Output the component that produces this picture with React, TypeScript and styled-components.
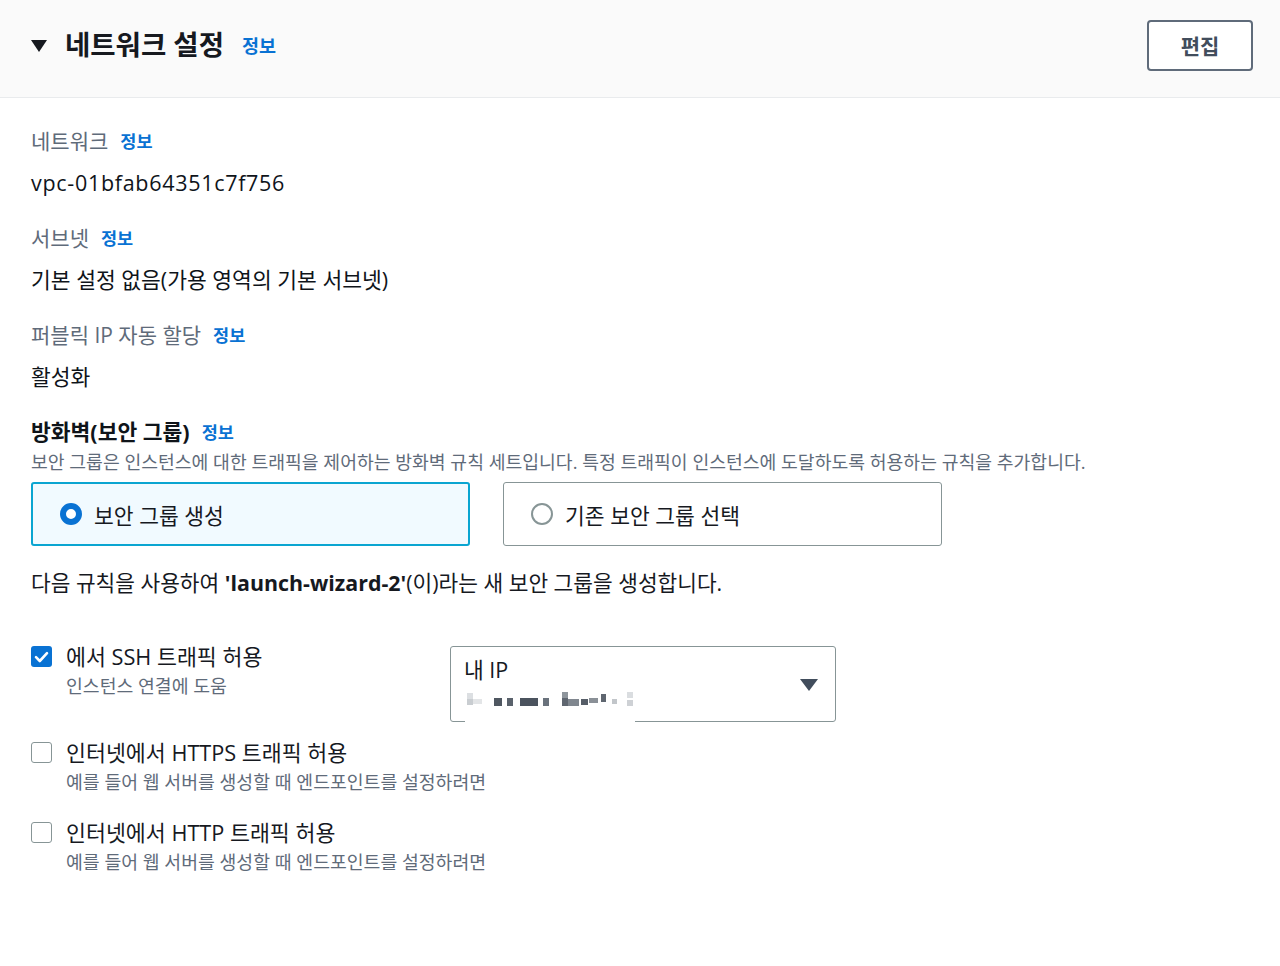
import * as React from 'react'
import styled, { createGlobalStyle } from 'styled-components'

const GlobalStyle = createGlobalStyle`
  html, body {
    margin: 0;
    padding: 0;
    background: #ffffff;
  }
  body {
    font-family: 'Open Sans', 'Noto Sans CJK KR', sans-serif;
    color: #16191f;
  }
`

const Page = styled.div`
  width: 1280px;
  min-height: 966px;
  background: #ffffff;
`

const Header = styled.header`
  height: 98px;
  box-sizing: border-box;
  display: flex;
  align-items: center;
  justify-content: space-between;
  padding: 0 27px 7px 31px;
  background: #fafafa;
  border-bottom: 1px solid #e9ebed;
`

const TitleRow = styled.div`
  display: flex;
  align-items: center;
`

const Caret = styled.span`
  width: 0;
  height: 0;
  border-left: 8px solid transparent;
  border-right: 8px solid transparent;
  border-top: 12px solid #16191f;
  margin-right: 18px;
  margin-top: 2px;
`

const Title = styled.h2`
  margin: 0;
  font-size: 27.5px;
  line-height: 34px;
  font-weight: 700;
  color: #16191f;
`

const Info = styled.a<{ $size?: number }>`
  font-size: ${(p) => p.$size ?? 17.5}px;
  font-weight: 700;
  color: #0972d3;
  text-decoration: none;
  margin-left: ${(p) => (p.$size && p.$size > 18 ? 18 : 12)}px;
`

const EditButton = styled.button`
  width: 106px;
  height: 51px;
  box-sizing: border-box;
  border: 2px solid #5f6b7a;
  border-radius: 4px;
  background: #ffffff;
  font-family: inherit;
  font-size: 21px;
  font-weight: 700;
  color: #414d5c;
  cursor: pointer;
`

const Content = styled.div`
  padding: 28px 31px 40px;
  display: flex;
  flex-direction: column;
`

const Field = styled.div`
  display: flex;
  flex-direction: column;
  margin-bottom: 25px;
`

const Label = styled.div`
  display: flex;
  align-items: center;
  margin-top: 2px;
  margin-bottom: -2px;
  font-size: 21px;
  line-height: 26px;
  color: #5f6b7a;
`

const Value = styled.div<{ $tracking?: number }>`
  margin-top: 16px;
  font-size: 21.5px;
  line-height: 30px;
  letter-spacing: ${(p) => p.$tracking ?? 0}px;
  color: #0f141a;
`

const SectionHeading = styled.div`
  display: flex;
  align-items: center;
  margin-top: 1px;
  font-size: 21.5px;
  line-height: 28px;
  font-weight: 700;
  color: #0f141a;
`

const Description = styled.div`
  margin-top: 5px;
  font-size: 18.25px;
  line-height: 22px;
  color: #5f6b7a;
`

const Tiles = styled.div`
  display: flex;
  gap: 33px;
  margin-top: 9px;
`

const Tile = styled.label<{ $selected?: boolean }>`
  width: 439px;
  height: 64px;
  box-sizing: border-box;
  display: flex;
  align-items: center;
  padding-left: 27px;
  border: ${(p) => (p.$selected ? '2px solid #0aa5d1' : '1.5px solid #879596')};
  border-radius: 3px;
  background: ${(p) => (p.$selected ? '#f1faff' : '#ffffff')};
  font-size: 21.5px;
  color: #16191f;
  cursor: pointer;
`

const Radio = styled.span<{ $checked?: boolean }>`
  width: 22px;
  height: 22px;
  box-sizing: border-box;
  border-radius: 50%;
  background: #ffffff;
  border: ${(p) => (p.$checked ? '6px solid #0972d3' : '2px solid #879596')};
  margin-right: 12px;
  flex-shrink: 0;
`

const RuleText = styled.div`
  margin-top: 22px;
  font-size: 21.4px;
  line-height: 30px;
  color: #16191f;

  b {
    font-weight: 700;
  }
`

const Options = styled.div`
  display: flex;
  flex-direction: column;
  margin-top: 45px;
`

const OptionRow = styled.div<{ $space?: number }>`
  display: flex;
  align-items: flex-start;
  margin-top: ${(p) => p.$space ?? 0}px;
`

const Option = styled.label<{ $width?: number }>`
  display: flex;
  align-items: flex-start;
  width: ${(p) => (p.$width ? `${p.$width}px` : 'auto')};
  cursor: pointer;
`

const Check = styled.span<{ $checked?: boolean }>`
  width: 21px;
  height: 21px;
  box-sizing: border-box;
  margin-top: 3px;
  margin-right: 14px;
  border-radius: 3px;
  display: flex;
  align-items: center;
  justify-content: center;
  flex-shrink: 0;
  background: ${(p) => (p.$checked ? '#0972d3' : '#ffffff')};
  border: ${(p) => (p.$checked ? 'none' : '1.5px solid #879596')};
`

const OptionText = styled.div`
  display: flex;
  flex-direction: column;
`

const OptionTitle = styled.div`
  font-size: 21.7px;
  line-height: 28px;
  color: #16191f;
`

const OptionHint = styled.div`
  margin-top: 3px;
  font-size: 18.3px;
  line-height: 24px;
  color: #5f6b7a;
`

const Select = styled.div`
  position: relative;
  width: 386px;
  height: 76px;
  box-sizing: border-box;
  margin-top: 3px;
  border: 1.5px solid #879596;
  border-radius: 3px;
  display: flex;
  align-items: center;
  justify-content: space-between;
  padding: 0 17px 0 13px;
`

const SelectValue = styled.div`
  align-self: flex-start;
  margin-top: 10px;
  font-size: 21.5px;
  line-height: 26px;
  color: #16191f;
`

const SelectCaret = styled.span`
  width: 0;
  height: 0;
  border-left: 9px solid transparent;
  border-right: 9px solid transparent;
  border-top: 12px solid #414d5c;
  margin-top: 2px;
`

const Redacted = styled.svg`
  position: absolute;
  left: 14px;
  top: 40px;
`

const CheckMark = () => (
  <svg width="15" height="12" viewBox="0 0 15 12">
    <path d="M2 6.2 L5.8 10 L13 2.2" fill="none" stroke="#ffffff" strokeWidth="2.6" strokeLinecap="round" strokeLinejoin="round" />
  </svg>
)

const blocks: [number, number, number, number, string][] = [
  [2, 6, 6, 6, '#dcdfe2'],
  [2, 12, 6, 6, '#c9cdd1'],
  [8, 12, 9, 5, '#e3e5e7'],
  [29, 11, 8, 8, '#4f5761'],
  [42, 11, 6, 8, '#5a626c'],
  [55, 11, 18, 8, '#4b535e'],
  [78, 11, 6, 8, '#6a727c'],
  [97, 5, 6, 7, '#8e959c'],
  [97, 11, 6, 8, '#5f6670'],
  [103, 12, 11, 7, '#80878f'],
  [116, 12, 7, 6, '#565e68'],
  [124, 11, 9, 5, '#8a9097'],
  [136, 7, 5, 8, '#5f6670'],
  [147, 12, 5, 5, '#c2c6ca'],
  [162, 5, 6, 6, '#dadde0'],
  [162, 13, 6, 6, '#ced1d5'],
]

export default function App() {
  return (
    <Page>
      <GlobalStyle />
      <Header>
        <TitleRow>
          <Caret />
          <Title>네트워크 설정</Title>
          <Info $size={18.5}>정보</Info>
        </TitleRow>
        <EditButton>편집</EditButton>
      </Header>

      <Content>
        <Field>
          <Label>
            네트워크<Info>정보</Info>
          </Label>
          <Value $tracking={0.7}>vpc-01bfab64351c7f756</Value>
        </Field>
        <Field>
          <Label>
            서브넷<Info>정보</Info>
          </Label>
          <Value>기본 설정 없음(가용 영역의 기본 서브넷)</Value>
        </Field>
        <Field>
          <Label>
            퍼블릭 IP 자동 할당<Info>정보</Info>
          </Label>
          <Value>활성화</Value>
        </Field>

        <SectionHeading>
          방화벽(보안 그룹)<Info>정보</Info>
        </SectionHeading>
        <Description>
          보안 그룹은 인스턴스에 대한 트래픽을 제어하는 방화벽 규칙 세트입니다. 특정 트래픽이 인스턴스에 도달하도록 허용하는 규칙을 추가합니다.
        </Description>

        <Tiles>
          <Tile $selected>
            <Radio $checked />
            보안 그룹 생성
          </Tile>
          <Tile>
            <Radio />
            기존 보안 그룹 선택
          </Tile>
        </Tiles>

        <RuleText>
          다음 규칙을 사용하여 <b>'launch-wizard-2'</b>(이)라는 새 보안 그룹을 생성합니다.
        </RuleText>

        <Options>
          <OptionRow>
            <Option $width={419}>
              <Check $checked>
                <CheckMark />
              </Check>
              <OptionText>
                <OptionTitle>에서 SSH 트래픽 허용</OptionTitle>
                <OptionHint>인스턴스 연결에 도움</OptionHint>
              </OptionText>
            </Option>
            <Select>
              <SelectValue>내 IP</SelectValue>
              <SelectCaret />
              <Redacted width="170" height="38" viewBox="0 0 170 38">
                <rect x="0" y="0" width="170" height="38" fill="#ffffff" />
                {blocks.map(([x, y, w, h, c], i) => (
                  <rect key={i} x={x} y={y} width={w} height={h} fill={c} />
                ))}
              </Redacted>
            </Select>
          </OptionRow>

          <OptionRow $space={17}>
            <Option>
              <Check />
              <OptionText>
                <OptionTitle>인터넷에서 HTTPS 트래픽 허용</OptionTitle>
                <OptionHint>예를 들어 웹 서버를 생성할 때 엔드포인트를 설정하려면</OptionHint>
              </OptionText>
            </Option>
          </OptionRow>

          <OptionRow $space={25}>
            <Option>
              <Check />
              <OptionText>
                <OptionTitle>인터넷에서 HTTP 트래픽 허용</OptionTitle>
                <OptionHint>예를 들어 웹 서버를 생성할 때 엔드포인트를 설정하려면</OptionHint>
              </OptionText>
            </Option>
          </OptionRow>
        </Options>
      </Content>
    </Page>
  )
}
